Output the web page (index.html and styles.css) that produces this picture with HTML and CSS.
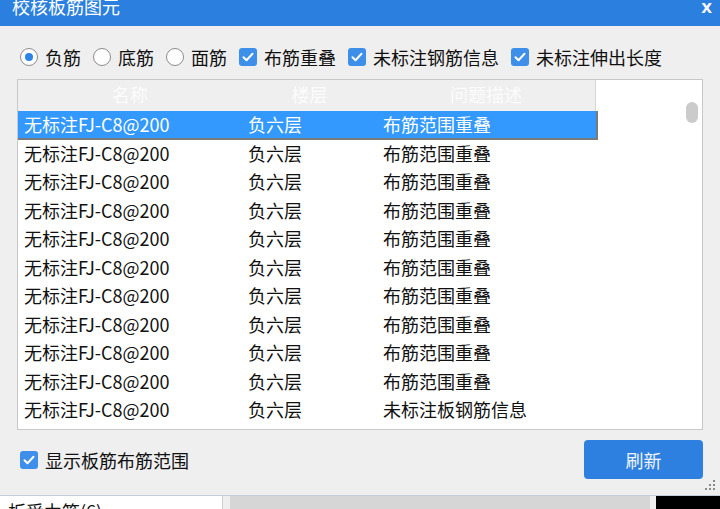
FILE: index.html
```html
<!DOCTYPE html>
<html lang="zh-CN">
<head>
    <meta charset="UTF-8">
    <meta name="viewport" content="width=device-width, initial-scale=1.0">
    <title>校核板筋图元</title>
    <link rel="stylesheet" href="styles.css">
</head>
<body>
    <div class="dialog">
        <div class="titlebar">
            <span class="title">校核板筋图元</span>
            <span class="close">X</span>
        </div>
        <div class="options">
            <label class="opt"><span class="radio checked"></span>负筋</label>
            <label class="opt"><span class="radio"></span>底筋</label>
            <label class="opt"><span class="radio"></span>面筋</label>
            <label class="opt"><span class="check"><svg viewBox="0 0 18 18"><path d="M4.5 9.2l3 3 6-6.4" /></svg></span>布筋重叠</label>
            <label class="opt"><span class="check"><svg viewBox="0 0 18 18"><path d="M4.5 9.2l3 3 6-6.4" /></svg></span>未标注钢筋信息</label>
            <label class="opt"><span class="check"><svg viewBox="0 0 18 18"><path d="M4.5 9.2l3 3 6-6.4" /></svg></span>未标注伸出长度</label>
        </div>
        <div class="table">
            <div class="list">
                <div class="head">
                    <span>名称</span>
                    <span>楼层</span>
                    <span>问题描述</span>
                </div>
                <div class="rows" id="rows"></div>
            </div>
            <div class="track"><div class="thumb"></div></div>
        </div>
        <div class="footer">
            <label class="opt"><span class="check"><svg viewBox="0 0 18 18"><path d="M4.5 9.2l3 3 6-6.4" /></svg></span>显示板筋布筋范围</label>
            <button class="refresh">刷新</button>
        </div>
        <svg class="grip" viewBox="0 0 12 12">
            <rect x="9" y="1" width="2" height="2" />
            <rect x="5" y="5" width="2" height="2" />
            <rect x="9" y="5" width="2" height="2" />
            <rect x="1" y="9" width="2" height="2" />
            <rect x="5" y="9" width="2" height="2" />
            <rect x="9" y="9" width="2" height="2" />
        </svg>
    </div>
    <div class="strip">
        <div class="tree">板受力筋(6)</div>
        <div class="tab"><span class="tab-x">x</span></div>
        <div class="black"></div>
    </div>
    <script>
        const rows = document.getElementById('rows');
        const data = [];
        for (let i = 0; i < 10; i++) {
            data.push(['无标注FJ-C8@200', '负六层', '布筋范围重叠']);
        }
        data.push(['无标注FJ-C8@200', '负六层', '未标注板钢筋信息']);
        data.forEach((r, i) => {
            const row = document.createElement('div');
            row.className = i === 0 ? 'row selected' : 'row';
            r.forEach(t => {
                const c = document.createElement('span');
                c.textContent = t;
                row.appendChild(c);
            });
            rows.appendChild(row);
        });
    </script>
</body>
</html>
```

FILE: styles.css
```css
* {
    margin: 0;
    padding: 0;
    box-sizing: border-box;
}
body {
    width: 720px;
    height: 509px;
    overflow: hidden;
    background: #efefef;
    font-family: "Noto Sans CJK SC", "Microsoft YaHei", sans-serif;
    font-size: 18px;
    color: #111;
}
.dialog {
    position: relative;
    height: 495px;
    background: #efefef;
}
.titlebar {
    height: 26px;
    background: #2b7fde;
    color: #fff;
    display: flex;
    justify-content: space-between;
    padding: 0 8px 0 12px;
}
.title {
    line-height: 13px;
    font-size: 18px;
}
.close {
    font-family: "DejaVu Sans", sans-serif;
    font-size: 14px;
    font-weight: bold;
    line-height: 16px;
}
.options {
    display: flex;
    align-items: center;
    gap: 12px;
    height: 30px;
    margin-top: 16px;
    padding-left: 20px;
}
.opt {
    display: flex;
    align-items: center;
    gap: 7px;
    line-height: 30px;
}
.radio {
    width: 18px;
    height: 18px;
    border-radius: 50%;
    border: 1px solid #8c8c8c;
    background: #fff;
    display: flex;
    align-items: center;
    justify-content: center;
}
.radio.checked::after {
    content: "";
    width: 8px;
    height: 8px;
    border-radius: 50%;
    background: #2d84e6;
}
.check {
    width: 18px;
    height: 18px;
    border-radius: 3px;
    background: #3d8fe9;
    display: flex;
}
.check svg {
    width: 18px;
    height: 18px;
    fill: none;
    stroke: #fff;
    stroke-width: 2;
    stroke-linecap: round;
    stroke-linejoin: round;
}
.table {
    display: flex;
    margin: 7px 0 0 17px;
    width: 686px;
    height: 351px;
    border: 1px solid #c8c8c8;
    background: #fff;
}
.list {
    width: 580px;
}
.head {
    display: grid;
    grid-template-columns: 224px 135px 218px;
    width: 578px;
    height: 31px;
    background: #efefef;
    border-right: 1px solid #d6d6d6;
    color: #fcfcfc;
    line-height: 29px;
    text-align: center;
}
.row {
    display: grid;
    grid-template-columns: 224px 135px 218px;
    height: 28.5px;
    line-height: 27px;
}
.row span {
    padding-left: 6px;
    white-space: nowrap;
}
.row.selected {
    background: #3399ff;
    color: #fff;
    border-right: 2px solid #7a7a7a;
    border-bottom: 2px solid #7a7a7a;
}
.track {
    width: 12px;
    margin-left: auto;
    margin-right: 4px;
    padding-top: 22px;
}
.thumb {
    height: 21px;
    border-radius: 6px;
    background: #cbcbcb;
}
.footer {
    display: flex;
    align-items: center;
    justify-content: space-between;
    height: 39px;
    margin-top: 10px;
    padding: 0 17px 0 20px;
}
.refresh {
    width: 119px;
    height: 39px;
    border: none;
    border-radius: 4px;
    background: #2e80e0;
    color: #eef4ff;
    font-family: inherit;
    font-size: 18px;
}
.grip {
    position: absolute;
    right: 4px;
    bottom: 4px;
    width: 12px;
    height: 12px;
    fill: #8a8a8a;
}
.strip {
    display: flex;
    height: 14px;
    border-top: 1px solid #c5cdd9;
    background: #efefef;
}
.tree {
    width: 223px;
    background: #fff;
    border-right: 1px solid #d0d0d0;
    padding-left: 8px;
    line-height: 30px;
    white-space: nowrap;
}
.tab {
    width: 420px;
    margin-left: 7px;
    background: #d6d6d6;
    text-align: right;
    padding-right: 12px;
}
.tab-x {
    font-family: "DejaVu Sans", sans-serif;
    font-size: 12px;
    color: #777;
    line-height: 18px;
}
.black {
    width: 64px;
    margin-left: auto;
    background: #000;
}
```
